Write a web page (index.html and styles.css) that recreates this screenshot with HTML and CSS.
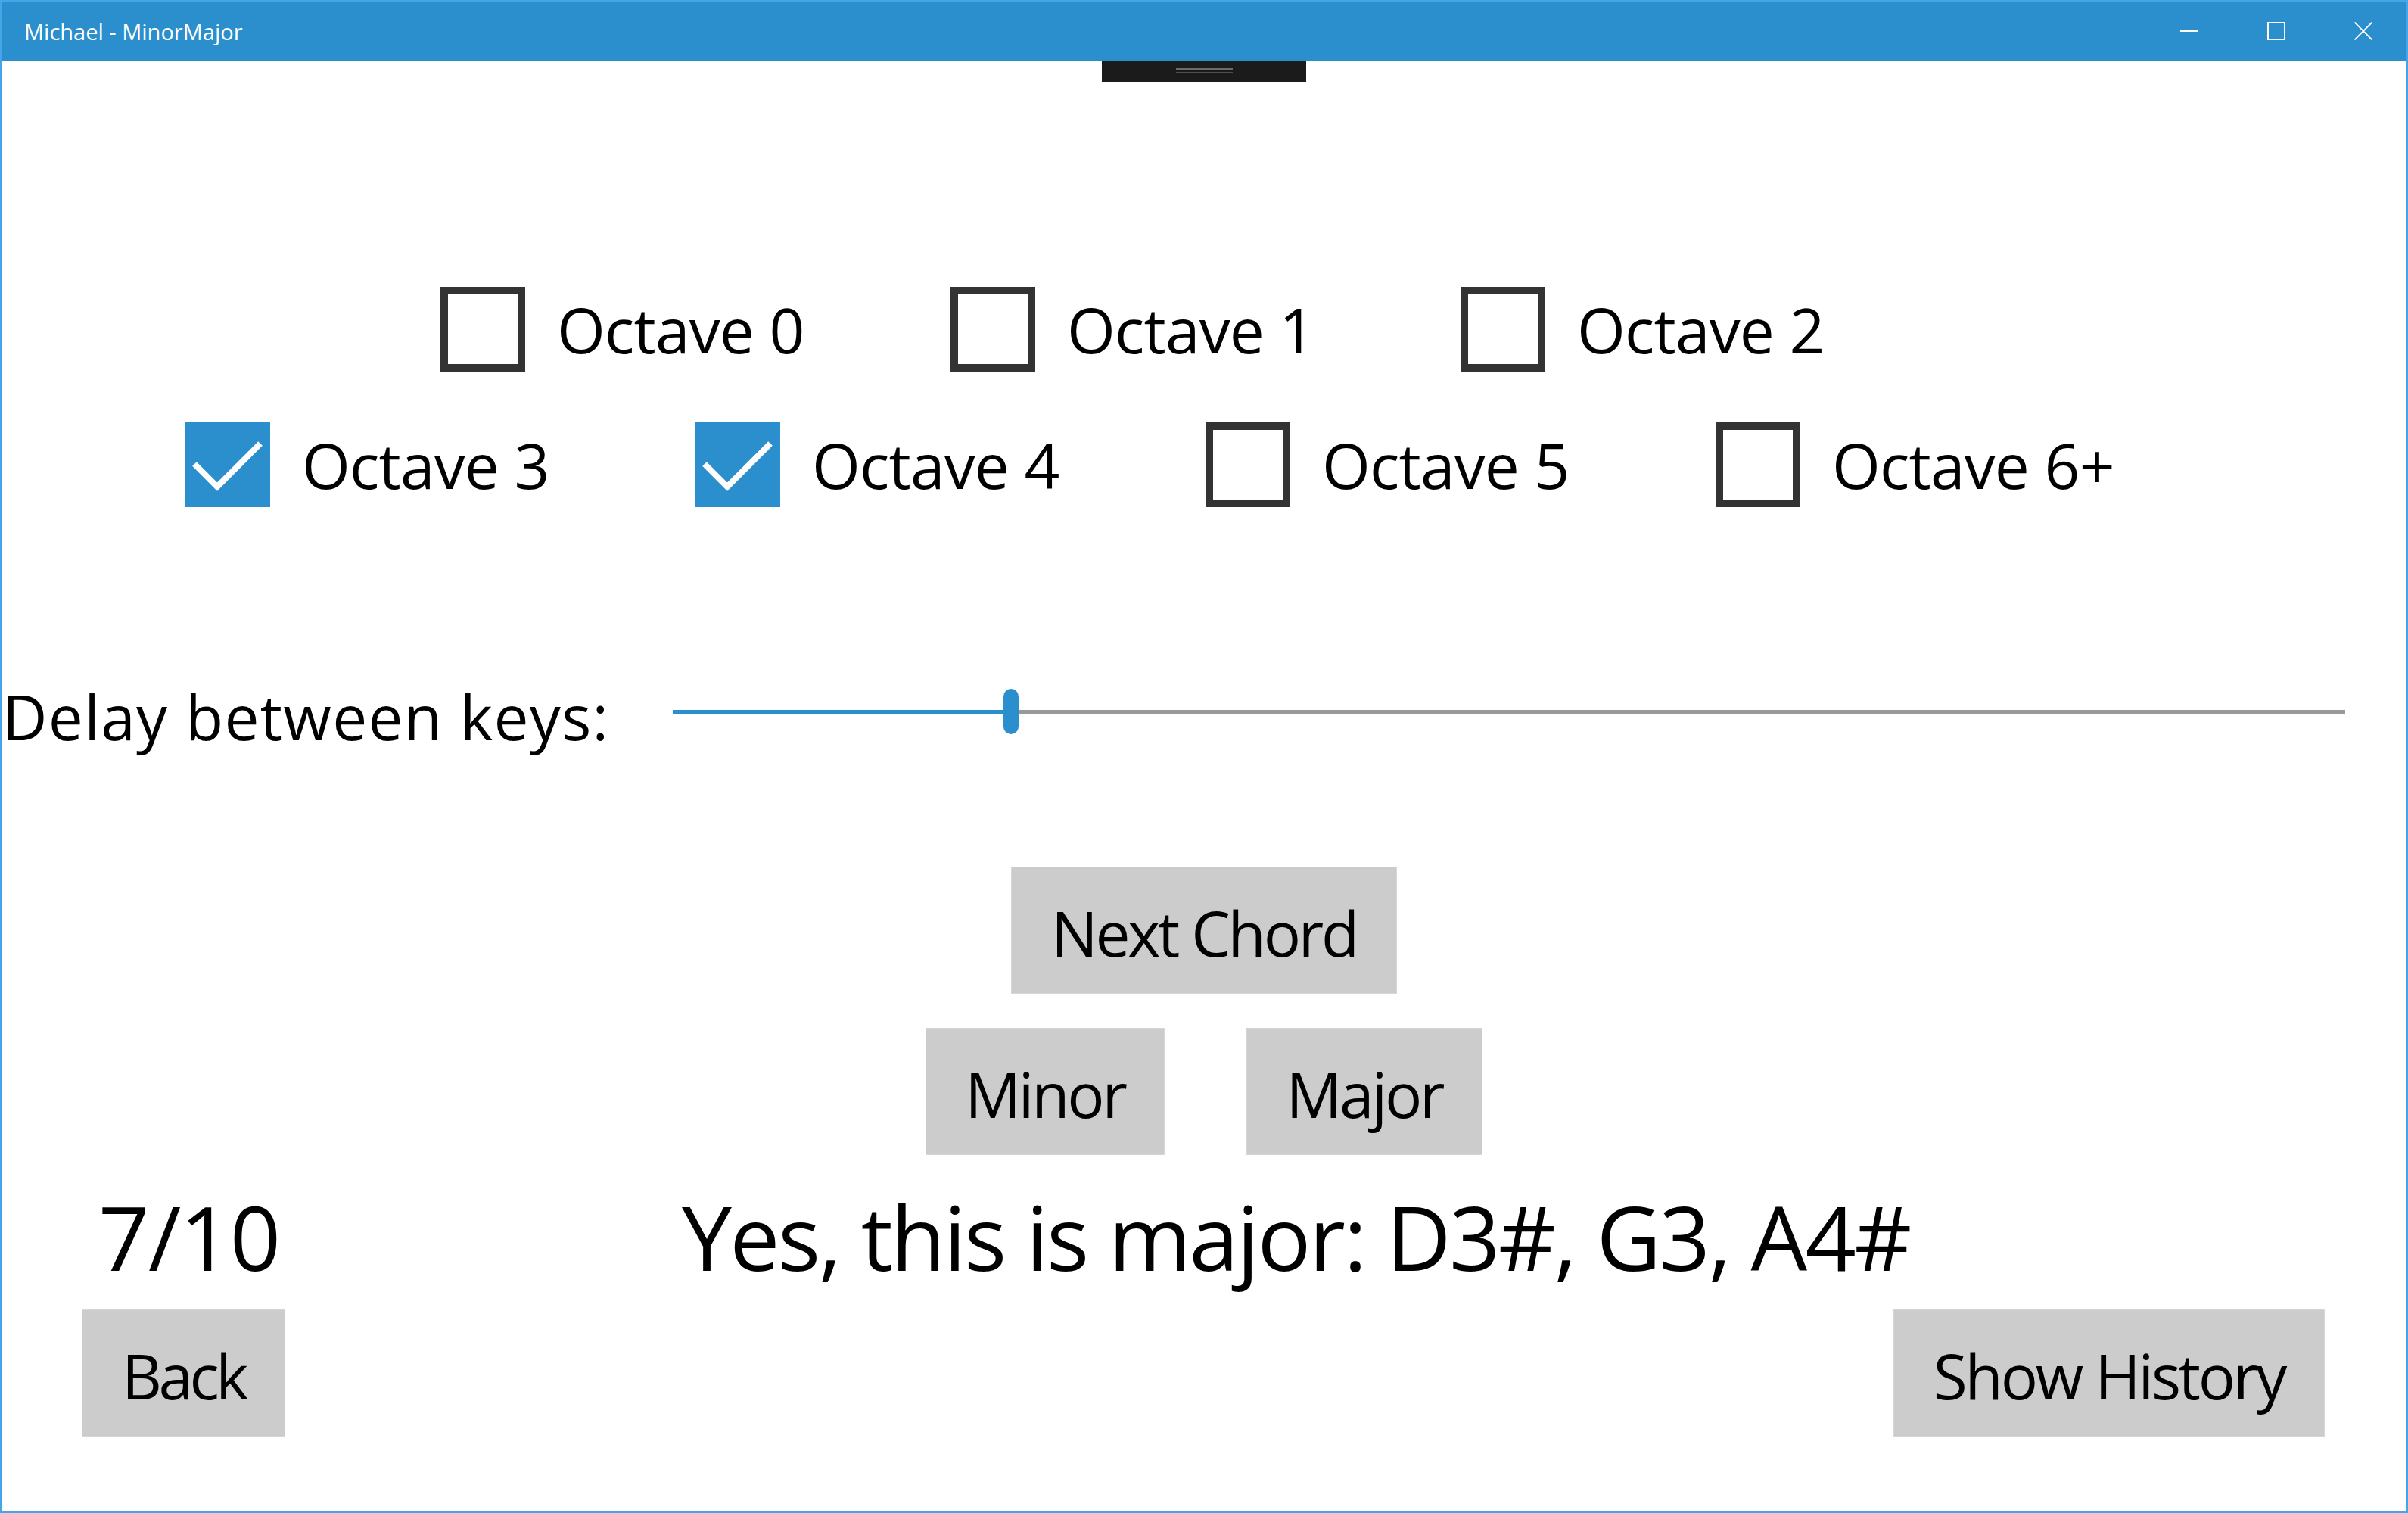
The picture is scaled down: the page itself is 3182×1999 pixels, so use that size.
FILE: index.html
```html
<!DOCTYPE html>
<html lang="en">
<head>
<meta charset="utf-8">
<title>Michael - MinorMajor</title>
<link rel="stylesheet" href="styles.css">
</head>
<body>
<div class="window">
  <header class="titlebar">
    <span class="title">Michael - MinorMajor</span>
    <div class="caption">
      <div class="cap-btn">
        <svg width="24" height="24" viewBox="0 0 24 24"><line x1="0" y1="12" x2="24" y2="12" stroke="#fff" stroke-width="2"/></svg>
      </div>
      <div class="cap-btn">
        <svg width="24" height="24" viewBox="0 0 24 24"><rect x="1" y="1" width="22" height="22" fill="none" stroke="#fff" stroke-width="2"/></svg>
      </div>
      <div class="cap-btn">
        <svg width="24" height="24" viewBox="0 0 24 24"><path d="M0.5 0.5 L23.5 23.5 M23.5 0.5 L0.5 23.5" stroke="#fff" stroke-width="1.8" fill="none"/></svg>
      </div>
    </div>
  </header>

  <main class="content">
    <div class="handle"><span class="grip"></span><span class="grip grip-low"></span></div>

    <section class="checks">
      <div class="check-row">
        <label class="check"><span class="box"></span><span class="check-label">Octave 0</span></label>
        <label class="check"><span class="box"></span><span class="check-label">Octave 1</span></label>
        <label class="check"><span class="box"></span><span class="check-label">Octave 2</span></label>
      </div>
      <div class="check-row">
        <label class="check"><span class="box box-on"><svg width="112" height="112" viewBox="0 0 112 112"><polyline points="12,55 42,85 99,28" fill="none" stroke="#fff" stroke-width="8"/></svg></span><span class="check-label">Octave 3</span></label>
        <label class="check"><span class="box box-on"><svg width="112" height="112" viewBox="0 0 112 112"><polyline points="12,55 42,85 99,28" fill="none" stroke="#fff" stroke-width="8"/></svg></span><span class="check-label">Octave 4</span></label>
        <label class="check"><span class="box"></span><span class="check-label">Octave 5</span></label>
        <label class="check"><span class="box"></span><span class="check-label">Octave 6+</span></label>
      </div>
    </section>

    <section class="delay">
      <span class="delay-label">Delay between keys:</span>
      <div class="slider">
        <span class="track-fill" style="width: 437px"></span>
        <span class="thumb"></span>
        <span class="track-rest"></span>
      </div>
    </section>

    <div class="btn btn-next">Next Chord</div>

    <div class="answer-row">
      <div class="btn btn-minor">Minor</div>
      <div class="btn btn-major">Major</div>
    </div>

    <div class="result-row">
      <span class="score">7/10</span>
      <span class="result">Yes, this is major: D3#, G3, A4#</span>
    </div>

    <div class="bottom-row">
      <div class="btn btn-back">Back</div>
      <div class="btn btn-history">Show History</div>
    </div>
  </main>
</div>
</body>
</html>
```

FILE: styles.css
```css
html, body {
  margin: 0;
  padding: 0;
  background: #ffffff;
}

body {
  width: 3182px;
  height: 1999px;
  overflow: hidden;
  font-family: "Open Sans", "Noto Sans", sans-serif;
  color: #000;
}

.window {
  width: 3182px;
  height: 1999px;
  box-sizing: border-box;
  border: 2px solid #45a4ea;
  display: flex;
  flex-direction: column;
  background: #fff;
}

.titlebar {
  height: 78px;
  flex: none;
  background: #2b8ecd;
  display: flex;
  align-items: center;
}

.title {
  margin-left: 30px;
  font-size: 29px;
  color: #fff;
  letter-spacing: 0;
}

.caption {
  margin-left: auto;
  display: flex;
  height: 100%;
}

.cap-btn {
  width: 115px;
  height: 100%;
  display: flex;
  align-items: center;
  justify-content: center;
}

.content {
  flex: 1;
  position: relative;
  display: flex;
  flex-direction: column;
}

.handle {
  position: absolute;
  left: 1454px;
  top: 0;
  width: 270px;
  height: 28px;
  background: #1b1b1b;
  display: flex;
  flex-direction: column;
  align-items: center;
  padding-top: 10px;
  box-sizing: border-box;
  gap: 3px;
}

.grip {
  width: 75px;
  height: 2px;
  background: #6a6a6a;
}

.grip-low {
  background: #4f4f4f;
}

.checks {
  margin-top: 299px;
  display: flex;
  flex-direction: column;
  gap: 67px;
}

.check-row {
  display: flex;
  justify-content: center;
  padding-left: 4px;
}

.check {
  width: 674px;
  height: 112px;
  display: flex;
  align-items: center;
}

.box {
  width: 112px;
  height: 112px;
  box-sizing: border-box;
  border: 10px solid #333333;
  flex: none;
  display: block;
}

.box-on {
  border: none;
  background: #2b8ecd;
}

.box-on svg {
  display: block;
}

.check-label {
  margin-left: 42px;
  font-size: 82px;
  letter-spacing: -0.8px;
  line-height: 1;
}

.delay {
  margin-top: 210px;
  height: 120px;
  display: flex;
  align-items: center;
}

.delay-label {
  width: 887px;
  flex: none;
  font-size: 82px;
  letter-spacing: 1.3px;
  line-height: 1;
  margin-top: 12px;
  padding-left: 1px;
  box-sizing: border-box;
}

.slider {
  flex: 1;
  margin-right: 81px;
  height: 60px;
  display: flex;
  align-items: center;
}

.track-fill {
  height: 5px;
  background: #2b8ecd;
  flex: none;
}

.thumb {
  width: 20px;
  height: 60px;
  border-radius: 10px;
  background: #2b8ecd;
  flex: none;
}

.track-rest {
  flex: 1;
  height: 5px;
  background: #999999;
}

.btn {
  height: 168px;
  background: #cccccc;
  box-shadow: inset 0 0 0 1px #d6d6d6;
  display: flex;
  align-items: center;
  justify-content: center;
  font-size: 82px;
  letter-spacing: -3.2px;
  box-sizing: border-box;
  padding-top: 6px;
  flex: none;
}

.btn-next {
  width: 510px;
  margin-top: 145px;
  align-self: center;
}

.answer-row {
  margin-top: 45px;
  display: flex;
  justify-content: center;
  gap: 108px;
}

.btn-minor {
  width: 316px;
}

.btn-major {
  width: 312px;
}

.result-row {
  margin-top: 37px;
  display: flex;
  align-items: baseline;
  font-size: 118px;
  line-height: 1.2;
}

.score {
  width: 899px;
  flex: none;
  padding-left: 128px;
  box-sizing: border-box;
  letter-spacing: -1.5px;
}

.result {
  letter-spacing: -2.6px;
}

.bottom-row {
  margin-top: 25px;
  display: flex;
  justify-content: space-between;
  padding: 0 108px 0 106px;
}

.btn-back {
  width: 269px;
  letter-spacing: -4.5px;
}

.btn-history {
  width: 570px;
}
```
